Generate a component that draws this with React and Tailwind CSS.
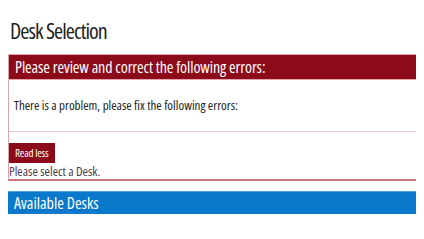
export default function App() {
  return (
    <div className="bg-white px-2 font-['Open_Sans',sans-serif] font-stretch-condensed text-[#333]">
      <h2 className="pt-[15px] pl-[2px] text-[22px] leading-[30px] tracking-[-0.9px] text-[#222]">
        Desk Selection
      </h2>

      <div className="mt-[9px] border-b-2 border-l border-b-[#c9757e] border-l-[#dba5aa]">
        <div className="border-y border-[#e7a6ad] bg-[#8c0b1b] px-[6px] text-[16px] leading-[24px] tracking-[-0.1px] text-white">
          Please review and correct the following errors:
        </div>
        <div className="border-b border-[#ebc9cc] px-[5px] pt-[17px] pb-[17px]">
          <p className="text-[13px] leading-[17px] text-[#222]">
            There is a problem, please fix the following errors:
          </p>
        </div>
        <div className="pt-[11px]">
          <button className="block bg-[#8c0b1b] px-[6px] text-[11px] leading-[20px] tracking-[-0.2px] text-white">
            Read less
          </button>
          <p className="text-[13px] leading-[16px] text-[#4e3b4a]">Please select a Desk.</p>
        </div>
      </div>

      <div className="mt-[10px] border-t border-[#4aa3e6] bg-[#0a78cb] px-[6px] text-[16px] leading-[22px] text-white">
        Available Desks
      </div>
      <div className="h-[25px]" />
    </div>
  )
}
